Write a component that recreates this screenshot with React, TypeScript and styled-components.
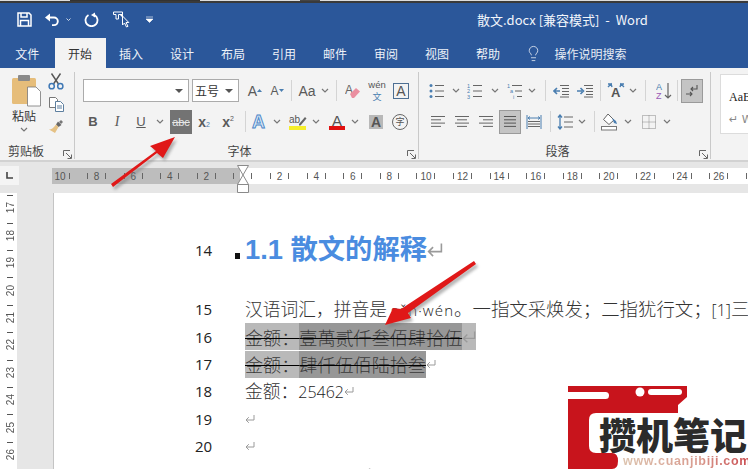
import { Lightbulb } from 'lucide-react'
import styled, { createGlobalStyle } from 'styled-components'

const Global = createGlobalStyle`
  html, body { margin: 0; padding: 0; background: #fff; }
  * { box-sizing: border-box; }
`

const UI = `"Noto Sans CJK SC", "Liberation Sans", sans-serif`
const INK = '#5a5a5a'
const BLUE = '#4a7eb0'

const Window = styled.div`
  position: relative;
  width: 748px;
  height: 469px;
  overflow: hidden;
  display: flex;
  flex-direction: column;
  font-family: ${UI};
  background: #e6e6e6;
`

const TopStrip = styled.div`
  height: 3px;
  flex-shrink: 0;
  background:
    linear-gradient(#0000 0 1px, #3a3a3a 1px 3px),
    linear-gradient(90deg, #ddd 0 70px, #333 70px 200px, #ddd 200px 300px, #444 300px 320px, #ddd 320px);
`

const TitleBar = styled.div`
  height: 33px;
  flex-shrink: 0;
  display: flex;
  align-items: center;
  background: #2b579a;
  color: #fff;
`

const Qat = styled.div`
  width: 477px;
  flex-shrink: 0;
  display: flex;
  align-items: center;
  padding-left: 16px;
`

const QatButton = styled.span<{ $w: number; $ml?: number }>`
  width: ${(p) => p.$w}px;
  height: 20px;
  margin-left: ${(p) => p.$ml ?? 0}px;
  flex-shrink: 0;
  display: flex;
  align-items: center;
  justify-content: center;
`

const DocTitle = styled.div`
  font-size: 13px;
  white-space: pre;
  color: #f2f5fa;
`

const TabBar = styled.div`
  height: 32px;
  flex-shrink: 0;
  display: flex;
  align-items: flex-end;
  background: #2b579a;
`

const Tab = styled.div<{ $active?: boolean; $w?: number }>`
  width: ${(p) => p.$w ?? 51}px;
  height: 30px;
  flex-shrink: 0;
  display: flex;
  align-items: center;
  justify-content: center;
  font-size: 12px;
  color: ${(p) => (p.$active ? '#333' : '#eef2f8')};
  background: ${(p) => (p.$active ? '#f3f3f3' : 'transparent')};
`

const SearchHint = styled.div`
  display: flex;
  align-items: center;
  gap: 13px;
  height: 30px;
  margin-left: 11px;
  font-size: 12px;
  color: #e8edf5;
`

const Ribbon = styled.div`
  height: 94px;
  flex-shrink: 0;
  display: flex;
  align-items: flex-start;
  padding-top: 4px;
  background: #f3f3f3;
  border-bottom: 2px solid #d2d2d2;
`

const Group = styled.div<{ $w: number }>`
  width: ${(p) => p.$w}px;
  height: 87px;
  flex-shrink: 0;
  display: flex;
  flex-direction: column;
  border-right: 1px solid #c9c9c9;
`

const GroupBody = styled.div`
  flex: 1;
  display: flex;
  flex-direction: column;
  gap: 6px;
  padding-top: 6px;
`

const ToolRow = styled.div<{ $pad: number }>`
  height: 25px;
  display: flex;
  align-items: center;
  padding-left: ${(p) => p.$pad}px;
`

const Footer = styled.div`
  height: 21px;
  padding-top: 5px;
  flex-shrink: 0;
  display: flex;
  align-items: center;
`

const FooterLabel = styled.div<{ $pr?: number }>`
  flex: 1;
  text-align: center;
  font-size: 12px;
  line-height: 16px;
  color: #444;
  padding-right: ${(p) => p.$pr ?? 0}px;
`

const Launcher = styled.span`
  width: 14px;
  margin-top: 6px;
  display: flex;
  justify-content: center;
`

const Tool = styled.span<{ $w?: number; $ml?: number }>`
  width: ${(p) => p.$w ?? 24}px;
  height: 24px;
  margin-left: ${(p) => p.$ml ?? 0}px;
  flex-shrink: 0;
  display: flex;
  align-items: center;
  justify-content: center;
  color: ${INK};
`

const Pressed = styled(Tool)<{ $dark?: boolean }>`
  width: 22px;
  background: ${(p) => (p.$dark ? '#737373' : '#c4c4c4')};
  border: 1px solid ${(p) => (p.$dark ? '#737373' : '#9a9a9a')};
`

const Sep = styled.span<{ $ml: number }>`
  width: 1px;
  height: 21px;
  flex-shrink: 0;
  margin-left: ${(p) => p.$ml}px;
  background: #d4d4d4;
`

const Letter = styled.span<{ $size?: number; $bold?: boolean; $italic?: boolean; $under?: boolean; $serif?: boolean }>`
  font-family: ${(p) => (p.$serif ? '"Liberation Serif"' : '"Liberation Sans"')}, sans-serif;
  font-size: ${(p) => p.$size ?? 13}px;
  font-weight: ${(p) => (p.$bold ? 700 : 400)};
  font-style: ${(p) => (p.$italic ? 'italic' : 'normal')};
  text-decoration: ${(p) => (p.$under ? 'underline' : 'none')};
  line-height: 1;
  color: ${INK};
`

const Sub = styled.span`
  font-family: "Liberation Sans", sans-serif;
  font-size: 7px;
  line-height: 8px;
  align-self: flex-end;
  margin-bottom: 5px;
  color: ${BLUE};
`

const Sup = styled.span`
  font-family: "Liberation Sans", sans-serif;
  font-size: 7px;
  line-height: 8px;
  align-self: flex-start;
  margin-top: 5px;
  color: ${INK};
`

const StrikeText = styled.span`
  font-family: "Liberation Sans", sans-serif;
  font-size: 11px;
  color: #e6e6e6;
  text-decoration: line-through;
`

const Wen = styled.span`
  display: flex;
  flex-direction: column;
  align-items: center;
  font-family: "Liberation Sans", sans-serif;
  font-size: 9.5px;
  line-height: 11px;
  color: #555;
`

const WenHan = styled.span`
  font-family: ${UI};
  font-size: 9px;
  line-height: 13px;
  color: ${BLUE};
`

const BoxA = styled.span`
  width: 16px;
  height: 16px;
  display: flex;
  align-items: center;
  justify-content: center;
  border: 1px solid #4d6f93;
  font-family: "Liberation Sans", sans-serif;
  font-size: 14px;
  color: #555;
`

const ShadeA = styled.span`
  width: 14px;
  height: 14px;
  display: flex;
  align-items: center;
  justify-content: center;
  background: #b8b8b8;
  font-family: "Liberation Sans", sans-serif;
  font-size: 14px;
  font-weight: 700;
  color: #555;
`

const Circled = styled.span`
  width: 16px;
  height: 16px;
  display: flex;
  align-items: center;
  justify-content: center;
  border: 1px solid #666;
  border-radius: 50%;
  font-size: 9px;
  line-height: 13px;
  color: #555;
`

const FontCombo = styled.div<{ $w: number; $ml?: number }>`
  width: ${(p) => p.$w}px;
  height: 23px;
  margin-left: ${(p) => p.$ml ?? 0}px;
  flex-shrink: 0;
  display: flex;
  align-items: center;
  justify-content: space-between;
  padding: 0 5px 0 2px;
  background: #fff;
  border: 1px solid #ababab;
  font-size: 12px;
  color: #333;
`

const ClipboardBody = styled.div`
  flex: 1;
  display: flex;
`

const PasteColumn = styled.div`
  width: 44px;
  padding: 3px 0 0 12px;
  display: flex;
  flex-direction: column;
  font-size: 12px;
  color: #333;
`

const PasteLabel = styled.span`
  margin-top: 1px;
  line-height: 16px;
`

const PasteChevron = styled.span`
  width: 24px;
  display: flex;
  justify-content: center;
  margin-top: 3px;
`

const SmallTools = styled.div`
  display: flex;
  flex-direction: column;
  gap: 5px;
  width: 24px;
`

const SmallTool = styled.span`
  height: 18px;
  display: flex;
  align-items: center;
  justify-content: center;
`

const Gallery = styled.div`
  width: 40px;
  height: 60px;
  margin-left: 9px;
  margin-top: 2px;
  padding: 14px 0 0 8px;
  background: #fff;
  border: 1px solid #dcdcdc;
  border-right: none;
  white-space: nowrap;
  overflow: hidden;
`

const GalleryTop = styled.div`
  font-family: "Liberation Serif", serif;
  font-size: 12px;
  color: #222;
  line-height: 16px;
`

const GalleryBottom = styled.div`
  font-family: "DejaVu Sans", sans-serif;
  font-size: 11px;
  color: #888;
  margin-top: 8px;
  line-height: 14px;
`

const RulerRow = styled.div`
  position: relative;
  height: 31px;
  flex-shrink: 0;
  display: flex;
  align-items: flex-start;
  background: #e6e6e6;
`

const RulerCorner = styled.div`
  width: 19px;
  height: 19px;
  margin-top: 4px;
  flex-shrink: 0;
  display: flex;
  align-items: center;
  justify-content: center;
  background: #f4f4f4;
`

const HTrack = styled.div`
  margin-left: 33px;
  margin-top: 6px;
  height: 16px;
  flex: 1;
  min-width: 0;
  display: flex;
  overflow: hidden;
  background: linear-gradient(90deg, #bdbdbd 188px, #fff 188px);
`

const HCells = styled.div`
  display: flex;
  margin-left: -10.3px;
`

const HCell = styled.div`
  width: 36.6px;
  flex-shrink: 0;
  display: flex;
  align-items: center;
  justify-content: center;
`

const HTick = styled.span`
  width: 1px;
  height: 6px;
  background: #666;
`

const HNum = styled.span`
  width: 17px;
  text-align: center;
  font-family: "Liberation Sans", sans-serif;
  font-size: 10px;
  color: #555;
`

const IndentMarker = styled.svg`
  position: absolute;
  left: 237px;
  top: 3px;
`

const Body = styled.div`
  flex: 1;
  min-height: 0;
  display: flex;
`

const VRuler = styled.div`
  width: 17px;
  flex-shrink: 0;
  padding-left: 3px;
  padding-top: 1.3px;
  background: #fff;
  overflow: hidden;
`

const VCell = styled.div`
  height: 27.4px;
  position: relative;
  display: flex;
  align-items: center;
  justify-content: center;
`

const VDash = styled.span`
  position: absolute;
  top: 1px;
  left: 4px;
  width: 6px;
  height: 1px;
  background: #555;
`

const VNum = styled.span`
  writing-mode: vertical-rl;
  transform: rotate(180deg);
  font-family: "Liberation Sans", sans-serif;
  font-size: 10px;
  color: #555;
`

const Gutter = styled.div`
  width: 37px;
  flex-shrink: 0;
  background: #e6e6e6;
  border-right: 1px solid #c4c4c4;
`

const Page = styled.div`
  flex: 1;
  min-width: 0;
  padding: 39px 0 0 141px;
  background: #fff;
  overflow: hidden;
`

const Line = styled.div<{ $h?: number; $after?: number }>`
  height: ${(p) => p.$h ?? 27.4}px;
  margin-bottom: ${(p) => p.$after ?? 0}px;
  display: flex;
  align-items: center;
  white-space: nowrap;
`

const LineNo = styled.span`
  width: 19px;
  flex-shrink: 0;
  font-family: "Open Sans", "Liberation Sans", sans-serif;
  font-size: 15px;
  color: #222;
`

const Marker = styled.span`
  width: 31px;
  flex-shrink: 0;
  display: flex;
  justify-content: flex-end;
  align-items: center;
  padding: 11px 5px 0 0;
`

const MarkerDot = styled.span`
  width: 5px;
  height: 6px;
  background: #111;
`

const Heading = styled.span`
  font-family: "Liberation Sans", ${UI};
  font-size: 27.3px;
  font-weight: 700;
  color: #4a8ce0;
  line-height: 36px;
`

const Para = styled.span`
  font-size: 18.4px;
  font-weight: 300;
  color: #333;
  line-height: 27px;
`

const ParaLead = styled.span`
  font-size: 17.75px;
`

const Latin = styled.span`
  font-family: "Open Sans", "Liberation Sans", sans-serif;
  font-size: 16px;
  color: #1a1a1a;
`

const WideLatin = styled(Latin)`
  font-size: 15px;
  letter-spacing: 1.1px;
`

const Selected = styled.span<{ $strong?: boolean }>`
  display: inline-flex;
  align-items: center;
  height: 27px;
  background: ${(p) => (p.$strong ? '#979797' : '#b9b9b9')};
`

const SelectedLine = styled.span`
  display: inline-flex;
  align-items: center;
  font-size: 18.1px;
  font-weight: 300;
  color: #3a3a3a;
  text-decoration: line-through;
  text-decoration-color: #000;
  text-decoration-thickness: 1px;
`

const ReturnSvg = styled.svg`
  flex-shrink: 0;
`

const Indent = styled.span<{ $w: number }>`
  width: ${(p) => p.$w}px;
  flex-shrink: 0;
`

const Overlay = styled.svg`
  position: absolute;
  left: 0;
  top: 0;
  pointer-events: none;
`

const Logo = styled.div`
  position: absolute;
  right: 0;
  bottom: 0;
  width: 180px;
  height: 83px;
  overflow: hidden;
`

const LogoName = styled.span`
  position: absolute;
  left: 31px;
  top: 28px;
  font-size: 37px;
  font-weight: 900;
  line-height: 40px;
  color: #2b2b2b;
  white-space: nowrap;
`

const LogoUrl = styled.span`
  position: absolute;
  left: 55px;
  top: 68px;
  font-family: "Liberation Sans", sans-serif;
  font-size: 12.5px;
  line-height: 14px;
  font-weight: 700;
  letter-spacing: 0.7px;
  white-space: nowrap;
  color: transparent;
  background: linear-gradient(90deg, #dcc3ae, #d99a8e 60%, #c8454a);
  -webkit-background-clip: text;
  background-clip: text;
`

const Chev = ({ color = '#777' }: { color?: string }) => (
  <svg width="8" height="5" viewBox="0 0 8 5">
    <path d="M1 1l3 3 3-3" fill="none" stroke={color} strokeWidth="1.2" />
  </svg>
)

const Caret = () => (
  <svg width="8" height="4" viewBox="0 0 8 4">
    <path d="M0 0h8L4 4z" fill="#555" />
  </svg>
)

const LauncherIcon = () => (
  <svg width="9" height="9" viewBox="0 0 9 9">
    <path d="M.5 6V.5H7M3 3l5 5M8.5 4.5v4h-4" fill="none" stroke="#666" />
  </svg>
)

const Lines = ({ rows, color = '#666' }: { rows: [number, number][]; color?: string }) => (
  <svg width="16" height="14" viewBox="0 0 16 14">
    {rows.map(([a, b], i) => (
      <path key={i} d={`M${a} ${1.5 + i * 3.3}H${b}`} stroke={color} strokeWidth="1" />
    ))}
  </svg>
)

const ReturnMark = ({ size = 10 }: { size?: number }) => (
  <ReturnSvg width={size} height={size} viewBox="0 0 10 10">
    <path d="M9 1v5H1.2M3.8 3.2L1 6l2.8 2.8" fill="none" stroke="#9a9a9a" strokeWidth="1" />
  </ReturnSvg>
)

const ListIcon = ({ marks }: { marks: 'dots' | 'nums' | 'multi' }) => (
  <svg width="16" height="18" viewBox="0 -1 16 18">
    {marks === 'dots' && (
      <g fill={BLUE}>
        <circle cx="2" cy="2.5" r="1.5" />
        <circle cx="2" cy="8" r="1.5" />
        <circle cx="2" cy="13.5" r="1.5" />
      </g>
    )}
    {marks === 'nums' && (
      <g fontFamily="Liberation Sans" fontSize="5.5" fill={BLUE}>
        <text x="0" y="4.5">1</text>
        <text x="0" y="10">2</text>
        <text x="0" y="15.5">3</text>
      </g>
    )}
    {marks === 'multi' && (
      <g fontFamily="Liberation Sans" fontSize="5.5" fill={BLUE}>
        <text x="0" y="4.5">1</text>
        <text x="3" y="10">a</text>
        <text x="6" y="15.5">i</text>
      </g>
    )}
    <path
      d={marks === 'multi' ? 'M5 2.5h10M8 8h7M10 13.5h5' : 'M6 2.5h9M6 8h9M6 13.5h9'}
      stroke="#666"
      strokeWidth="1"
    />
  </svg>
)

const IndentIcon = ({ more }: { more?: boolean }) => (
  <svg width="16" height="14" viewBox="0 0 16 14">
    <path d="M7 1.5h9M9 4.5h7M9 7.5h7M9 10.5h7M7 13h9" stroke="#666" strokeWidth="1" />
    <path
      d={more ? 'M0 7h5M3.5 4l3 3-3 3' : 'M7 7H2M4 4L1 7l3 3'}
      fill="none"
      stroke={BLUE}
      strokeWidth="1.6"
    />
  </svg>
)

function App() {
  const hNums = ['10', '8', '6', '4', '2', '', '2', '4', '6', '8', '10', '12', '14', '16', '18', '20', '22', '24', '26', '']
  const vNums = [17, 18, 19, 20, 21, 22, 23, 24, 25, 26]

  return (
    <Window>
      <Global />
      <TopStrip />
      <TitleBar>
        <Qat>
          <QatButton $w={16}>
            <svg width="15" height="15" viewBox="0 0 15 15">
              <path d="M1 1h11l2 2v11H1zM4 1v4h6V1M3.5 14V8.5h8V14" fill="none" stroke="#fff" strokeWidth="1.5" />
            </svg>
          </QatButton>
          <QatButton $w={16} $ml={12}>
            <svg width="16" height="14" viewBox="0 0 16 14">
              <path d="M4 4.5h6a3.8 3.8 0 0 1 0 7.6H8" fill="none" stroke="#fff" strokeWidth="1.9" />
              <path d="M6 .5v8L1 4.5z" fill="#fff" />
            </svg>
          </QatButton>
          <QatButton $w={6} $ml={5}>
            <svg width="5" height="3" viewBox="0 0 5 3">
              <path d="M.5.5l2 2 2-2" fill="none" stroke="#cdd8e8" />
            </svg>
          </QatButton>
          <QatButton $w={16} $ml={12}>
            <svg width="15" height="15" viewBox="0 0 15 15">
              <path d="M4.5 3a6 6 0 1 0 6 0" fill="none" stroke="#fff" strokeWidth="1.8" />
              <path d="M11 .5v5l-4-2.5z" fill="#fff" />
            </svg>
          </QatButton>
          <QatButton $w={18} $ml={14}>
            <svg width="18" height="17" viewBox="0 0 18 17">
              <path d="M.5 1h9v2.5h-4V8H3V3.5H.5z" fill="none" stroke="#fff" />
              <path d="M6.5 3.5h3v3" fill="#fff" stroke="#fff" />
              <path d="M9.5 5v9l2-2 2 4 1.5-.7-2-3.8h2.8z" fill="#2b579a" stroke="#fff" />
            </svg>
          </QatButton>
          <QatButton $w={8} $ml={14}>
            <svg width="7" height="7" viewBox="0 0 7 7">
              <path d="M0 1h7M0 3h7L3.5 6.5z" fill="#fff" stroke="#fff" strokeWidth=".6" />
            </svg>
          </QatButton>
        </Qat>
        <DocTitle>散文.docx [兼容模式]  -  Word</DocTitle>
      </TitleBar>

      <TabBar>
        <Tab $w={54.5}>文件</Tab>
        <Tab $active>开始</Tab>
        <Tab>插入</Tab>
        <Tab>设计</Tab>
        <Tab>布局</Tab>
        <Tab>引用</Tab>
        <Tab>邮件</Tab>
        <Tab>审阅</Tab>
        <Tab>视图</Tab>
        <Tab>帮助</Tab>
        <SearchHint>
          <Lightbulb size={17} strokeWidth={1.1} color="#eef2f8" />
          操作说明搜索
        </SearchHint>
      </TabBar>

      <Ribbon>
        <Group $w={75}>
          <ClipboardBody>
            <PasteColumn>
              <svg width="29" height="32" viewBox="0 0 29 32">
                <rect x="0" y="3" width="24" height="26" rx="1.5" fill="#e6bd7a" />
                <rect x="6" y="0" width="12" height="6" rx="1" fill="#8a8a8a" />
                <path d="M15.5 12H24l4.5 4.5V31h-13z" fill="#fff" stroke="#777" strokeWidth=".8" />
              </svg>
              <PasteLabel>粘贴</PasteLabel>
              <PasteChevron>
                <Chev />
              </PasteChevron>
            </PasteColumn>
            <SmallTools>
              <SmallTool>
                <svg width="16" height="17" viewBox="0 0 16 17">
                  <path d="M3.5 .5l7 10.5M12.5 .5l-7 10.5" stroke="#555" strokeWidth="1.4" />
                  <circle cx="3.7" cy="13.2" r="2.6" fill="none" stroke="#3f78b5" strokeWidth="1.5" />
                  <circle cx="12.3" cy="13.2" r="2.6" fill="none" stroke="#3f78b5" strokeWidth="1.5" />
                </svg>
              </SmallTool>
              <SmallTool>
                <svg width="15" height="15" viewBox="0 0 15 15">
                  <path d="M.5.5h6l2 2v8H.5z" fill="#fff" stroke="#777" />
                  <path d="M6.5 4.5h5l3 3v7h-8z" fill="#fff" stroke="#5d7f9f" />
                  <path d="M8 9h5M8 11h5" stroke="#5d7f9f" />
                </svg>
              </SmallTool>
              <SmallTool>
                <svg width="16" height="16" viewBox="0 0 16 16">
                  <path d="M10 2.5l3.5 3.5-3 2-2.5-2.5z" fill="#666" />
                  <path d="M8 5.5l2.5 2.5L7 14 1 10.5c2.5 0 5-2 7-5z" fill="#e5c184" />
                  <path d="M11 3l2-2 2 2-2 2z" fill="#777" />
                </svg>
              </SmallTool>
            </SmallTools>
          </ClipboardBody>
          <Footer>
            <FooterLabel $pr={8}>剪贴板</FooterLabel>
            <Launcher>
              <LauncherIcon />
            </Launcher>
          </Footer>
        </Group>

        <Group $w={344}>
          <GroupBody>
            <ToolRow $pad={8}>
              <FontCombo $w={106}>
                <span />
                <Caret />
              </FontCombo>
              <FontCombo $w={47} $ml={3}>
                五号
                <Caret />
              </FontCombo>
              <Tool $w={18} $ml={7}>
                <Letter $size={14}>A</Letter>
                <svg width="5" height="3" viewBox="0 0 5 3">
                  <path d="M0 3h5L2.5 0z" fill={BLUE} />
                </svg>
              </Tool>
              <Tool $w={18} $ml={4}>
                <Letter $size={12}>A</Letter>
                <svg width="5" height="3" viewBox="0 0 5 3">
                  <path d="M0 0h5L2.5 3z" fill={BLUE} />
                </svg>
              </Tool>
              <Sep $ml={5} />
              <Tool $w={26} $ml={2}>
                <Letter $size={14}>Aa</Letter>
              </Tool>
              <Tool $w={10}>
                <Chev />
              </Tool>
              <Sep $ml={6} />
              <Tool $ml={4}>
                <svg width="16" height="16" viewBox="0 0 16 16">
                  <text x="0" y="11" fontFamily="Liberation Sans" fontSize="12" fill="#666">A</text>
                  <path d="M5 11l6-6 4 3.5-6 6.5H7z" fill="#ea8fa0" />
                </svg>
              </Tool>
              <Tool>
                <Wen>
                  wén
                  <WenHan>文</WenHan>
                </Wen>
              </Tool>
              <Tool>
                <BoxA>A</BoxA>
              </Tool>
            </ToolRow>

            <ToolRow $pad={6}>
              <Tool>
                <Letter $bold>B</Letter>
              </Tool>
              <Tool>
                <Letter $italic $serif $size={14}>I</Letter>
              </Tool>
              <Tool>
                <Letter $under>U</Letter>
              </Tool>
              <Tool $w={14}>
                <Chev />
              </Tool>
              <Pressed $dark $ml={3}>
                <StrikeText>abc</StrikeText>
              </Pressed>
              <Tool>
                <Letter $bold $size={14}>x</Letter>
                <Sub>2</Sub>
              </Tool>
              <Tool>
                <Letter $bold $size={14}>x</Letter>
                <Sup>2</Sup>
              </Tool>
              <Sep $ml={5} />
              <Tool $ml={2}>
                <svg width="18" height="22" viewBox="0 0 18 22">
                  <text x="1" y="17" fontFamily="Liberation Sans" fontWeight="700" fontSize="18" fill="#d8e6f5" stroke="#4a86c8" strokeWidth=".9">A</text>
                </svg>
              </Tool>
              <Tool $w={10}>
                <Chev />
              </Tool>
              <Tool $ml={4}>
                <svg width="18" height="18" viewBox="0 0 18 18">
                  <text x="0" y="10" fontFamily="Liberation Sans" fontSize="10" fill="#555">ab</text>
                  <path d="M10 11l6-7 1.5 1.5-6 7H10z" fill="#666" />
                  <rect x="0" y="13" width="17" height="4" fill="#f5ee2a" />
                </svg>
              </Tool>
              <Tool $w={10} $ml={1}>
                <Chev />
              </Tool>
              <Tool $ml={4}>
                <svg width="16" height="20" viewBox="0 0 16 20">
                  <text x="3" y="14" fontFamily="Liberation Sans" fontSize="15" fill="#555">A</text>
                  <rect x="0" y="14" width="16" height="4" fill="#e01010" />
                </svg>
              </Tool>
              <Tool $w={10} $ml={1}>
                <Chev />
              </Tool>
              <Tool $ml={4}>
                <ShadeA>A</ShadeA>
              </Tool>
              <Tool>
                <Circled>字</Circled>
              </Tool>
            </ToolRow>
          </GroupBody>
          <Footer>
            <FooterLabel>字体</FooterLabel>
            <Launcher>
              <LauncherIcon />
            </Launcher>
          </Footer>
        </Group>

        <Group $w={292}>
          <GroupBody>
            <ToolRow $pad={6}>
              <Tool>
                <ListIcon marks="dots" />
              </Tool>
              <Tool $w={14}>
                <Chev />
              </Tool>
              <Tool>
                <ListIcon marks="nums" />
              </Tool>
              <Tool $w={14} $ml={1}>
                <Chev />
              </Tool>
              <Tool $ml={1}>
                <ListIcon marks="multi" />
              </Tool>
              <Tool $w={10}>
                <Chev />
              </Tool>
              <Sep $ml={8} />
              <Tool $ml={3}>
                <IndentIcon />
              </Tool>
              <Tool>
                <IndentIcon more />
              </Tool>
              <Sep $ml={3} />
              <Tool $ml={3}>
                <svg width="18" height="20" viewBox="0 0 18 20">
                  <text x="4" y="16" fontFamily="Liberation Sans" fontWeight="700" fontSize="13" fill="#555">A</text>
                  <path d="M1 6l3-3 1 3M5 3H1M17 6l-3-3-1 3M13 3h4" fill="none" stroke={BLUE} strokeWidth="1.4" />
                </svg>
              </Tool>
              <Tool $w={10}>
                <Chev />
              </Tool>
              <Sep $ml={7} />
              <Tool $ml={6}>
                <svg width="16" height="22" viewBox="0 0 16 22">
                  <text x="0" y="10" fontFamily="Liberation Sans" fontSize="9" fill={BLUE}>A</text>
                  <text x="0" y="19" fontFamily="Liberation Sans" fontSize="9" fill="#9b59b6">Z</text>
                  <path d="M12 3v15M9 15l3 3 3-3" fill="none" stroke="#666" strokeWidth="1.2" />
                </svg>
              </Tool>
              <Sep $ml={1} />
              <Pressed $ml={3}>
                <svg width="14" height="14" viewBox="0 0 14 14">
                  <path d="M12 1v4H6M8 3L6 5l2 2" fill="none" stroke="#555" strokeWidth="1.1" />
                  <path d="M1 10h6M5 8l2 2-2 2" fill="none" stroke="#555" strokeWidth="1.1" />
                </svg>
              </Pressed>
            </ToolRow>

            <ToolRow $pad={7}>
              <Tool>
                <Lines rows={[[1, 15], [1, 11], [1, 15], [1, 11]]} />
              </Tool>
              <Tool>
                <Lines rows={[[1, 15], [3, 13], [1, 15], [3, 13]]} />
              </Tool>
              <Tool>
                <Lines rows={[[1, 15], [5, 15], [1, 15], [5, 15]]} />
              </Tool>
              <Pressed $ml={1}>
                <Lines rows={[[2, 14], [2, 14], [2, 14], [2, 14]]} color="#555" />
              </Pressed>
              <Tool $ml={1}>
                <svg width="16" height="16" viewBox="0 0 16 16">
                  <path d="M1 1v14M15 1v14M2 4h12M4 2.5L2 4l2 1.5M12 2.5L14 4l-2 1.5" fill="none" stroke={BLUE} />
                  <path d="M2 7.5h12M2 10h12M2 12.5h12" stroke="#666" />
                </svg>
              </Tool>
              <Sep $ml={4} />
              <Tool $ml={2}>
                <svg width="16" height="16" viewBox="0 0 16 16">
                  <path d="M3 1v14M1 3.5L3 1l2 2.5M1 12.5L3 15l2-2.5" fill="none" stroke={BLUE} strokeWidth="1.3" />
                  <path d="M7 3h9M7 8h9M7 13h9" stroke="#666" />
                </svg>
              </Tool>
              <Tool $w={10}>
                <Chev />
              </Tool>
              <Sep $ml={7} />
              <Tool $ml={3}>
                <svg width="18" height="18" viewBox="0 0 18 18">
                  <path d="M7 1l6 6-5 4.5-5.500-5z" fill="#fff" stroke="#666" />
                  <path d="M11 5l4 3 1 3-3-1z" fill={BLUE} />
                  <rect x=".5" y="13.5" width="15" height="3.5" fill="#fff" stroke="#777" />
                </svg>
              </Tool>
              <Tool $w={10} $ml={1}>
                <Chev />
              </Tool>
              <Tool $ml={4}>
                <svg width="14" height="14" viewBox="0 0 14 14">
                  <path d="M.5.5h13v13H.5zM7 .5v13M.5 7h13" fill="none" stroke="#888" strokeDasharray="1 1" />
                </svg>
              </Tool>
              <Tool $w={10} $ml={1}>
                <Chev />
              </Tool>
            </ToolRow>
          </GroupBody>
          <Footer>
            <FooterLabel>段落</FooterLabel>
            <Launcher>
              <LauncherIcon />
            </Launcher>
          </Footer>
        </Group>

        <Gallery>
          <GalleryTop>AaB</GalleryTop>
          <GalleryBottom>↵ W</GalleryBottom>
        </Gallery>
      </Ribbon>

      <RulerRow>
        <RulerCorner>
          <svg width="7" height="7" viewBox="0 0 7 7">
            <path d="M1 0v6h6" fill="none" stroke="#444" strokeWidth="1.6" />
          </svg>
        </RulerCorner>
        <HTrack>
          <HCells>
            {hNums.map((n, i) => (
              <HCell key={i}>
                <HTick />
                <HNum>{n}</HNum>
                <HTick />
              </HCell>
            ))}
          </HCells>
        </HTrack>
        <IndentMarker width="12" height="28" viewBox="0 0 12 28">
          <path d="M.5.5h11L6 10zM6 10l5.5 9.5H.5zM.5 19.5h11v8H.5z" fill="#fff" stroke="#8a8a8a" />
        </IndentMarker>
      </RulerRow>

      <Body>
        <VRuler>
          {vNums.map((n) => (
            <VCell key={n}>
              <VDash />
              <VNum>{n}</VNum>
            </VCell>
          ))}
        </VRuler>
        <Gutter />
        <Page>
          <Line $h={36} $after={27.6}>
            <LineNo>14</LineNo>
            <Marker>
              <MarkerDot />
            </Marker>
            <Heading>1.1 散文的解释</Heading>
            <ReturnMark size={16} />
          </Line>
          <Line>
            <LineNo>15</LineNo>
            <Marker />
            <Para>
              <ParaLead>汉语词汇，拼音是</ParaLead> <WideLatin>sǎn·wén</WideLatin>。一指文采焕发；二指犹行文；<Latin>[1]</Latin>三
            </Para>
          </Line>
          <Line>
            <LineNo>16</LineNo>
            <Marker />
            <Selected>
              <SelectedLine>金额：</SelectedLine>
              <Selected $strong>
                <SelectedLine>壹萬贰仟叁佰肆拾伍</SelectedLine>
              </Selected>
              <ReturnMark size={14} />
            </Selected>
          </Line>
          <Line>
            <LineNo>17</LineNo>
            <Marker />
            <Selected>
              <SelectedLine>金额：</SelectedLine>
              <Selected $strong>
                <SelectedLine>肆仟伍佰陆拾叁</SelectedLine>
              </Selected>
            </Selected>
            <ReturnMark />
          </Line>
          <Line>
            <LineNo>18</LineNo>
            <Marker />
            <Para>
              <ParaLead>金额：</ParaLead>
              <Latin>25462</Latin>
            </Para>
            <ReturnMark />
          </Line>
          <Line>
            <LineNo>19</LineNo>
            <Marker />
            <ReturnMark />
          </Line>
          <Line>
            <LineNo>20</LineNo>
            <Marker />
            <ReturnMark />
          </Line>
          <Line>
            <LineNo>21</LineNo>
            <Marker />
            <Indent $w={112} />
            <ReturnMark size={14} />
          </Line>
        </Page>
      </Body>

      <Overlay width="748" height="469" viewBox="0 0 748 469">
        <defs>
          <filter id="soft" x="-20%" y="-20%" width="140%" height="140%">
            <feGaussianBlur stdDeviation="1.5" />
          </filter>
        </defs>
        <g fill="#777" opacity=".55" filter="url(#soft)" transform="translate(2 3)">
          <path d="M111 184l2 3 44-34 6 5 12-21-25 9 6 5z" />
          <path d="M474 261l2 3-68 49 3 5-26 7 8-17 9 0z" />
        </g>
        <g fill="#e01818">
          <path d="M111 184l2 3 44-34 6 5 12-21-25 9 6 5z" />
          <path d="M474 261l2 3-68 49 3 5-26 7 8-17 8 1z" />
        </g>
      </Overlay>

      <Logo>
        <svg width="180" height="83" viewBox="0 0 180 83">
          <path
            d="M0 0H119V11L110 19V27H28Q21 27 21 34V60Q21 67 28 67H44Q50 67 50 75Q50 83 44 83H0Z"
            fill="#c8141c"
          />
          <rect x="-4" y="6" width="45" height="7" rx="3.5" fill="#fff" />
          <circle cx="72" cy="6" r="4.5" fill="#fff" />
          <rect x="80" y="3" width="34" height="6" rx="3" fill="#fff" />
        </svg>
        <LogoName>攒机笔记</LogoName>
        <LogoUrl>www.cuanjibiji.com</LogoUrl>
      </Logo>
    </Window>
  )
}

export default App
